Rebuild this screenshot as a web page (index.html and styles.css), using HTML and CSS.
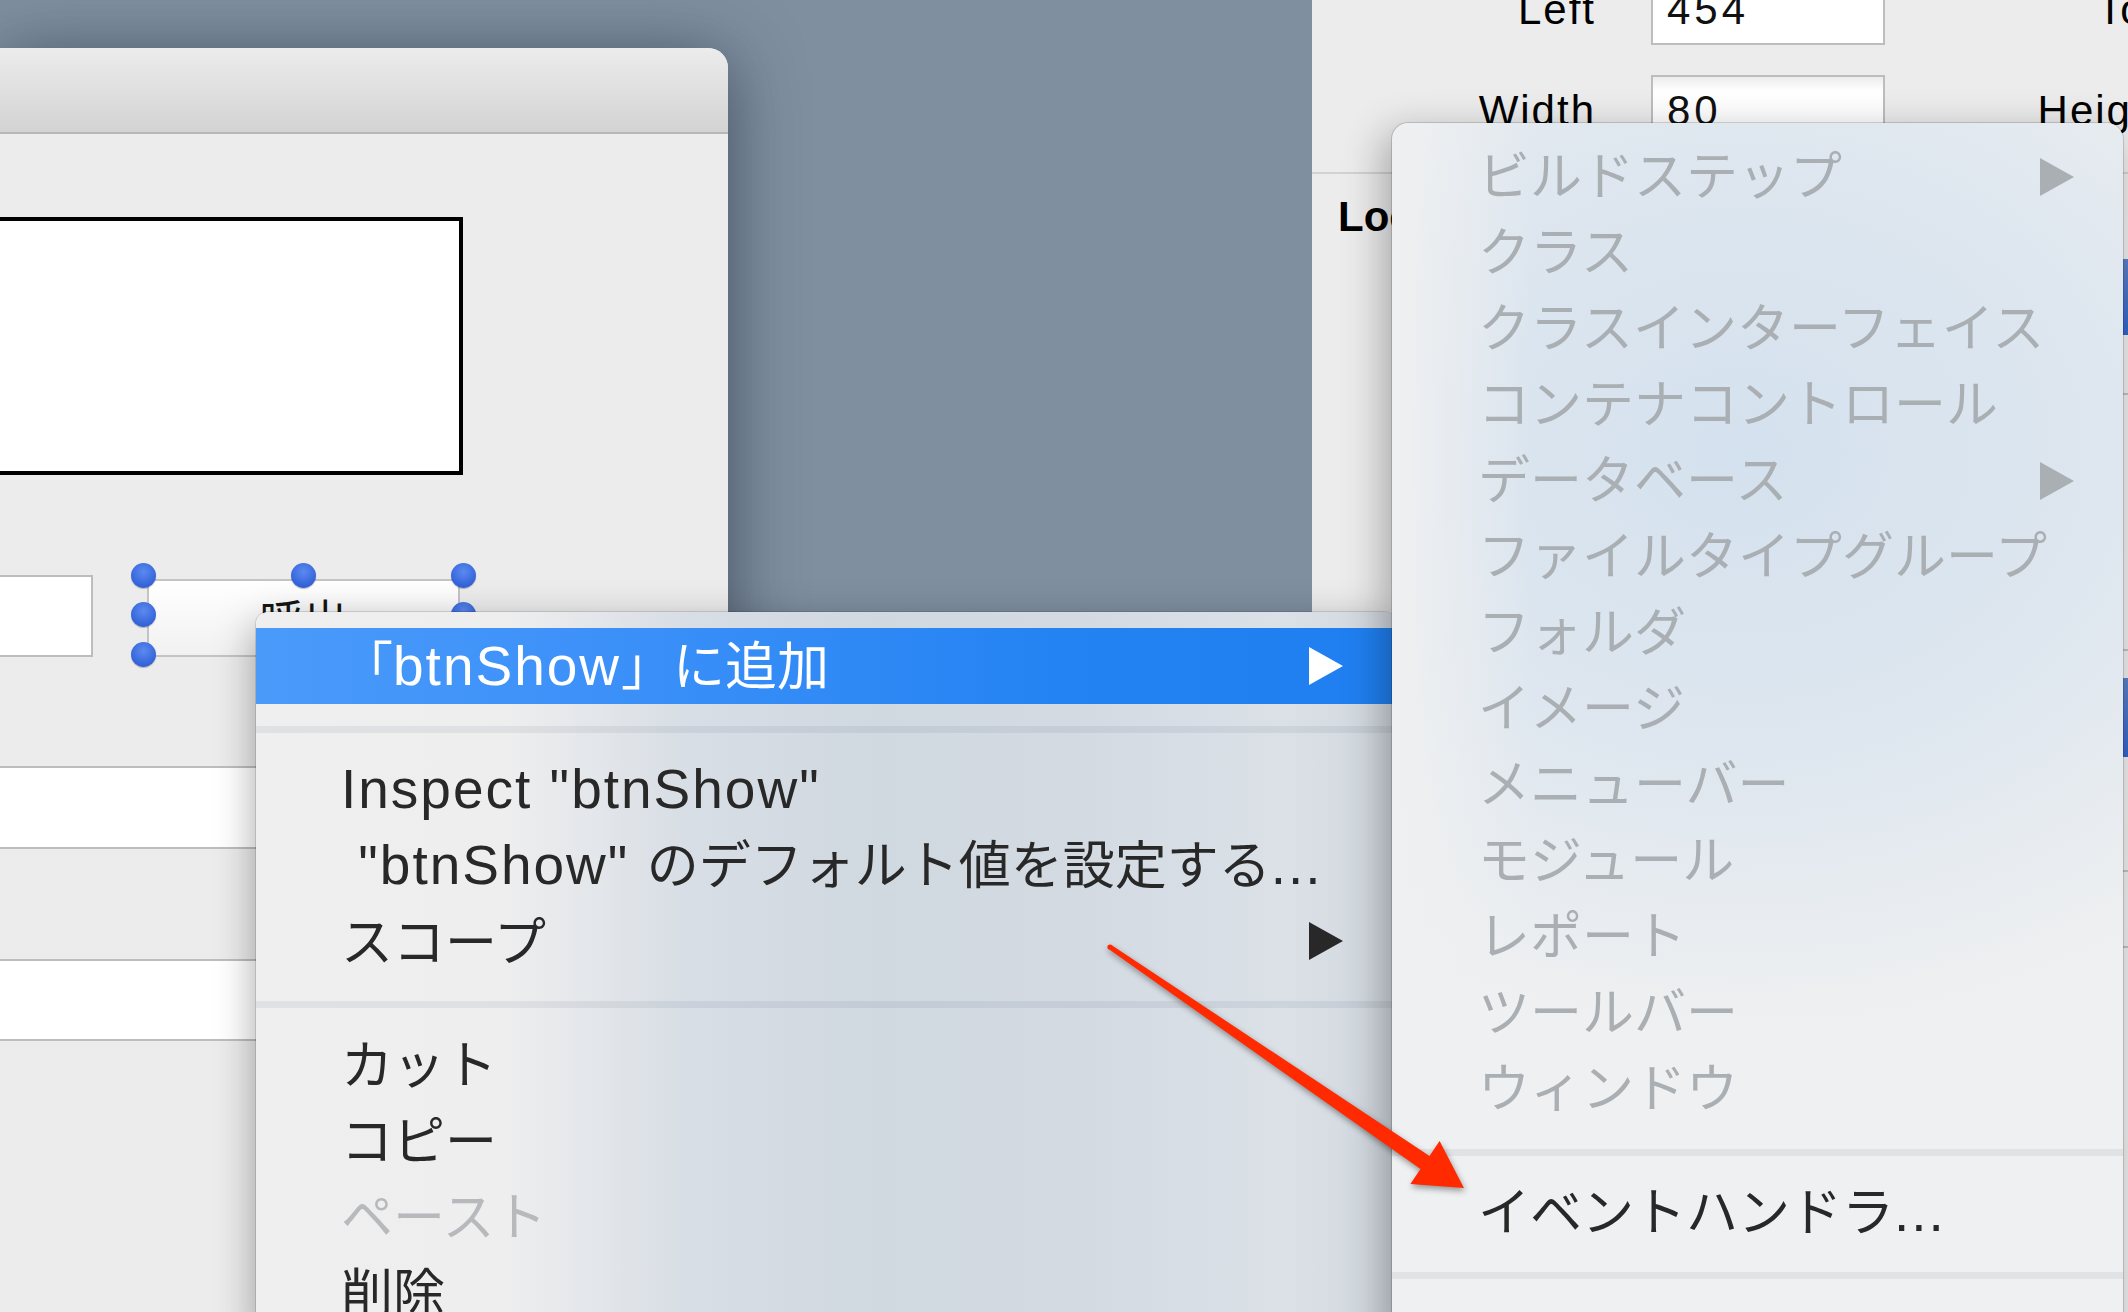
FILE: index.html
```html
<!DOCTYPE html>
<html lang="ja">
<head>
<meta charset="utf-8">
<title>Xojo レイアウトエディタ</title>
<link rel="stylesheet" href="styles.css">
</head>
<body>
<div class="desktop">
  <section class="form-window">
    <div class="titlebar"></div>
    <div class="form-body">
      <div class="ctl canvas-box"></div>
      <div class="ctl textfield tf-small"></div>
      <div class="ctl button">呼出</div>
      <span class="handle h-l h-t"></span>
      <span class="handle h-c h-t"></span>
      <span class="handle h-r h-t"></span>
      <span class="handle h-l h-m"></span>
      <span class="handle h-r h-m"></span>
      <span class="handle h-l h-b"></span>
      <span class="handle h-c h-b"></span>
      <span class="handle h-r h-b"></span>
      <div class="ctl textfield tf-row1"></div>
      <div class="ctl textfield tf-row2"></div>
    </div>
  </section>
  <div class="gap"></div>
  <aside class="inspector">
    <div class="props">
      <span class="lbl">Left</span><span class="fld">454</span><span class="lbl">Top</span><span class="fld"></span>
      <span class="lbl">Width</span><span class="fld">80</span><span class="lbl">Height</span><span class="fld"></span>
    </div>
    <div class="divider"></div>
    <div class="insp-body">
      <h3 class="group">Locking</h3>
      <div class="strip">
        <div class="s-blue s1"></div>
        <div class="s-line s2"></div>
        <div class="s-line s3"></div>
        <div class="s-blue s4"></div>
        <div class="s-line s5"></div>
        <div class="s-line s6"></div>
      </div>
    </div>
  </aside>
</div>

<div class="menu main-menu">
  <div class="mi hl"><span>「<span class="lat">btnShow</span>」に追加</span><i class="tri"></i></div>
  <div class="sep"></div>
  <div class="mi"><span class="lat">Inspect "btnShow"</span></div>
  <div class="mi"><span><span class="lat">&nbsp;"btnShow" </span>のデフォルト値を設定する<span class="lat">...</span></span></div>
  <div class="mi"><span class="ja">スコープ</span><i class="tri"></i></div>
  <div class="sep"></div>
  <div class="mi"><span class="ja">カット</span></div>
  <div class="mi"><span class="ja">コピー</span></div>
  <div class="mi dis"><span class="ja">ペースト</span></div>
  <div class="mi"><span class="ja">削除</span></div>
</div>

<div class="menu sub-menu">
  <div class="mi dis"><span>ビルドステップ</span><i class="tri"></i></div>
  <div class="mi dis"><span>クラス</span></div>
  <div class="mi dis"><span>クラスインターフェイス</span></div>
  <div class="mi dis"><span>コンテナコントロール</span></div>
  <div class="mi dis"><span>データベース</span><i class="tri"></i></div>
  <div class="mi dis"><span>ファイルタイプグループ</span></div>
  <div class="mi dis"><span>フォルダ</span></div>
  <div class="mi dis"><span>イメージ</span></div>
  <div class="mi dis"><span>メニューバー</span></div>
  <div class="mi dis"><span>モジュール</span></div>
  <div class="mi dis"><span>レポート</span></div>
  <div class="mi dis"><span>ツールバー</span></div>
  <div class="mi dis"><span>ウィンドウ</span></div>
  <div class="sep"></div>
  <div class="mi"><span>イベントハンドラ<span class="lat">...</span></span></div>
  <div class="sep"></div>
</div>

<svg class="arrow" width="2128" height="1312" viewBox="0 0 2128 1312" xmlns="http://www.w3.org/2000/svg">
  <g fill="#ff2a00">
    <circle cx="1110" cy="947" r="2.6"/>
    <polygon points="1111.4,944.9 1429.5,1155.9 1439.6,1141 1464,1188 1410.4,1184 1420.5,1169.1 1108.6,949.1"/>
  </g>
</svg>
</body>
</html>
```

FILE: styles.css
```css
* { box-sizing: border-box; }

html, body { margin: 0; padding: 0; }

body {
  width: 2128px;
  height: 1312px;
  overflow: hidden;
  position: relative;
  background: #7f8fa0;
  font-family: "Liberation Sans", "Noto Sans CJK JP", sans-serif;
}

.desktop {
  display: grid;
  grid-template-columns: 728px 584px 816px;
  height: 1312px;
}

/* ---------- form window ---------- */
.form-window {
  margin-top: 48px;
  background: #ececec;
  border-top-right-radius: 20px;
  box-shadow: 0 10px 70px rgba(25, 35, 50, 0.6);
  display: flex;
  flex-direction: column;
  position: relative;
  z-index: 1;
}

.titlebar {
  height: 86px;
  border-top-right-radius: 20px;
  background: linear-gradient(#ececec, #d3d3d3);
  border-bottom: 2px solid #b6b6b6;
}

.form-body {
  flex: 1;
  position: relative;
}

.ctl { position: absolute; }

.canvas-box {
  left: -4px;
  top: 83px;
  width: 467px;
  height: 258px;
  background: #fff;
  border: 4px solid #000;
}

.textfield {
  background: #fff;
  border: 2px solid #bdbdbd;
}

.tf-small { left: -2px; top: 441px; width: 95px; height: 82px; }
.tf-row1 { left: -2px; top: 632px; width: 800px; height: 83px; border-left: 0; border-right: 0; }
.tf-row2 { left: -2px; top: 825px; width: 800px; height: 82px; border-left: 0; border-right: 0; }

.button {
  left: 147px;
  top: 445px;
  width: 313px;
  height: 78px;
  border: 2px solid #c4c4c4;
  border-radius: 8px;
  background: linear-gradient(#ffffff, #f1f1f1);
  text-align: center;
  font-family: "Noto Sans CJK JP", sans-serif;
  font-size: 44px;
  line-height: 74px;
  color: #151515;
}

.handle {
  position: absolute;
  width: 25px;
  height: 25px;
  border-radius: 50%;
  background: radial-gradient(circle at 50% 35%, #5c8af0 0%, #3463d9 70%, #2d57c8 100%);
  box-shadow: 0 1px 1px rgba(0, 0, 0, 0.25);
}
.h-l { left: 131px; }
.h-c { left: 291px; }
.h-r { left: 451px; }
.h-t { top: 429px; }
.h-m { top: 468px; }
.h-b { top: 508px; }

/* ---------- inspector ---------- */
.inspector {
  background: #ececec;
  display: flex;
  flex-direction: column;
  overflow: hidden;
}

.props {
  display: grid;
  grid-template-columns: 284px 234px 231px 234px;
  grid-auto-rows: 71px;
  column-gap: 55px;
  row-gap: 30px;
  margin-top: -26px;
  font-size: 42px;
  color: #000;
}

.lbl {
  text-align: right;
  line-height: 71px;
  letter-spacing: 2px;
  white-space: nowrap;
}

.fld {
  background: linear-gradient(#ececec, #ffffff 14px);
  border: 2px solid #bdbdbd;
  line-height: 67px;
  padding-left: 14px;
  letter-spacing: 4px;
  color: #111;
}

.divider {
  margin-top: 26px;
  border-top: 2px solid #d2d2d2;
}

.insp-body {
  flex: 1;
  display: grid;
  grid-template-columns: 1fr 5px;
  align-items: start;
}

.group {
  margin: 18px 0 0 26px;
  font-size: 42px;
  line-height: 50px;
  font-weight: bold;
  color: #000;
}

.strip { display: flex; flex-direction: column; }
.s-blue { background: linear-gradient(#5c7fc4, #3262c9); }
.s-line { height: 2px; background: #bfbfbf; }
.s1 { margin-top: 85px; height: 76px; }
.s2 { margin-top: 58px; }
.s3 { margin-top: 254px; }
.s4 { margin-top: 27px; height: 79px; }
.s5 { margin-top: 113px; }
.s6 { margin-top: 74px; }

/* ---------- context menus ---------- */
.menu {
  position: absolute;
  font-size: 52px;
  color: #282828;
}

.main-menu {
  left: 256px;
  top: 612px;
  width: 1140px;
  height: 720px;
  padding-top: 16px;
  border-radius: 12px 12px 0 0;
  background: linear-gradient(to right, #efefef 0, #eeeeef 250px, #d8dee5 430px, #d0d8e0 620px, #d3dae2 820px, #dbe1e7 1030px, #d0d6dd 1140px);
  box-shadow: 0 0 0 1px rgba(0, 0, 0, 0.12), 0 12px 40px rgba(0, 0, 0, 0.35);
  z-index: 5;
}

.sub-menu {
  left: 1392px;
  top: 123px;
  width: 731px;
  height: 1220px;
  padding-top: 16px;
  border-radius: 16px 16px 0 0;
  background:
    linear-gradient(to right, rgba(239, 240, 241, 1) 0, rgba(239, 240, 241, 0) 140px),
    radial-gradient(720px 580px at 350px 330px, rgba(212, 225, 238, 1) 0%, rgba(212, 225, 238, 0.6) 55%, rgba(212, 225, 238, 0) 100%),
    #eff0f1;
  box-shadow: 0 0 0 1px rgba(0, 0, 0, 0.14), -8px 10px 40px rgba(0, 0, 0, 0.3);
  z-index: 6;
}

.mi {
  display: flex;
  align-items: center;
  justify-content: space-between;
  height: 76px;
  line-height: 76px;
  padding: 0 53px 0 85px;
  white-space: nowrap;
}

.sub-menu .mi { padding: 0 49px 0 86px; }

.ja {
  position: relative;
  top: 2px;
}

.mi.hl {
  background: linear-gradient(to right, #4a9afa 0%, #3a8ff8 35%, #2483f2 70%, #1f7ff0 100%);
  color: #fff;
}

.main-menu .mi.dis { color: #b7b9bc; }
.sub-menu .mi.dis { color: #aaafb4; }

.lat {
  font-size: 55px;
  letter-spacing: 2px;
}

.tri {
  display: block;
  width: 0;
  height: 0;
  border-left: 34px solid currentColor;
  border-top: 19px solid transparent;
  border-bottom: 19px solid transparent;
}

.sep { padding: 22px 0 18px; }
.sep::before {
  content: "";
  display: block;
  height: 7px;
  background: rgba(50, 65, 85, 0.08);
}

.arrow {
  position: absolute;
  left: 0;
  top: 0;
  z-index: 10;
  pointer-events: none;
  filter: drop-shadow(1px 3px 3px rgba(0, 0, 0, 0.4));
}
```
